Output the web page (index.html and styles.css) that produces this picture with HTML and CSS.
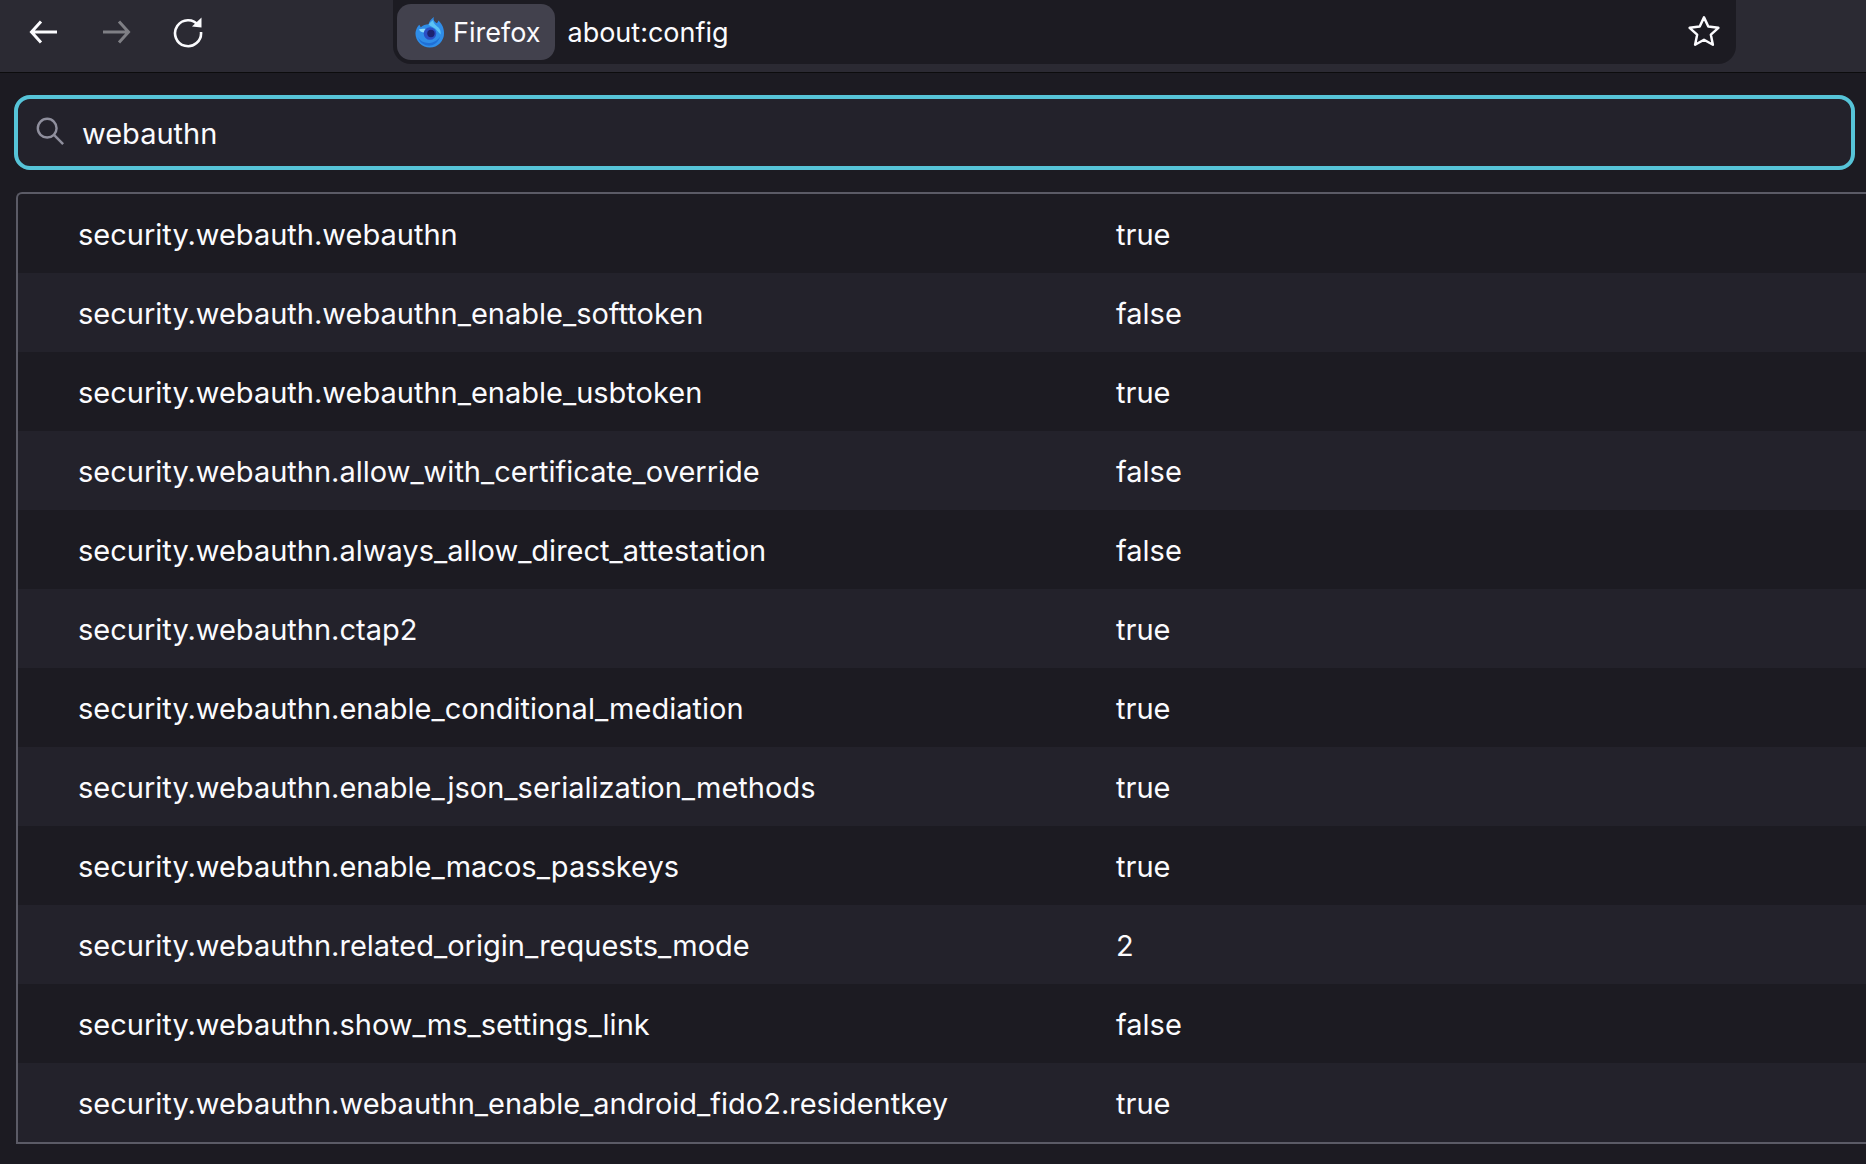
FILE: index.html
```html
<!DOCTYPE html>
<html lang="en">
<head>
 <meta charset="UTF-8">
 <title>about:config</title>
 <link rel="stylesheet" href="styles.css">
</head>
<body>
 <div class="toolbar">
 <div class="nav-buttons">
 <svg class="nav-icon" viewBox="0 0 32 32"><path d="M29 16H4M13 5.500 3.500 16 13 26.500" fill="none" stroke="#fbfbfe" stroke-width="3"/></svg>
 <svg class="nav-icon" viewBox="0 0 32 32"><path d="M3 16h25M19 5.500 28.500 16 19 26.500" fill="none" stroke="#7f7f85" stroke-width="3"/></svg>
 <svg class="nav-icon" viewBox="0 0 32 32"><path d="M26.500 9.500A13 13 0 1 0 29 16" fill="none" stroke="#fbfbfe" stroke-width="2.600"/><path d="M20 10.500 29.500 1.500V11.500Z" fill="#fbfbfe"/></svg>
 </div>
 <div class="urlbar">
 <div class="identity">
 <svg class="logo" viewBox="0 0 32 32">
 <path d="M2 14C3 11 4 9 5.500 8L7 10.500C9 8.500 12 7.500 15 7.500 15.500 4.500 18 2 20.500 0 19.500 3 21 5 23.500 6.500 24.500 5.500 25 4.500 25.200 3.500 28 6.500 31 10 31 16.500A14.500 14.500 0 0 1 1.500 17C1.500 16 1.700 15 2 14Z" fill="#2f8de8"/>
 <path d="M20 3C19.500 6 22 8 25 10.500 27 12.500 28 15 27.500 18L22 12 15 8C16 6 18 4.500 20 3Z" fill="#5cc3f5"/>
 <path d="M5 13C8 11.500 12 12 15 13.500L9.500 16C7.500 15.800 6 14.500 5 13Z" fill="#8fdcf8"/>
 <circle cx="16.500" cy="17" r="6.500" fill="#2b4fc4"/>
 <circle cx="17.500" cy="17" r="3.800" fill="#1d2270"/>
 <path d="M4 21C8 28 20 30 27 20 25 27 19 30 14 29.500 9 29 5.500 25.500 4 21Z" fill="#1f6fd6"/>
 </svg>
 <span class="bar-label">Firefox</span>
 </div>
 <span class="bar-label url-text">about:config</span>
 <svg class="star" viewBox="0 0 32 32"><path d="M16 3 19.800 11.200 28.800 12.300 22.100 18.400 23.900 27.300 16 22.900 8.100 27.300 9.900 18.400 3.200 12.300 12.200 11.200Z" fill="none" stroke="#fbfbfe" stroke-width="2.200" stroke-linejoin="round"/></svg>
 </div>
 </div>

 <div class="content">
 <div class="search">
 <svg class="search-icon" viewBox="0 0 32 32"><circle cx="13" cy="13" r="10" fill="none" stroke="#8f8f9d" stroke-width="2.600"/><path d="M20.500 20.500 30 30" stroke="#8f8f9d" stroke-width="2.600"/></svg>
 <span>webauthn</span>
 </div>

 <div class="prefs">
 <div class="pref"><span class="pref-name">security.webauth.webauthn</span><span>true</span></div>
 <div class="pref"><span class="pref-name">security.webauth.webauthn_enable_softtoken</span><span>false</span></div>
 <div class="pref"><span class="pref-name">security.webauth.webauthn_enable_usbtoken</span><span>true</span></div>
 <div class="pref"><span class="pref-name">security.webauthn.allow_with_certificate_override</span><span>false</span></div>
 <div class="pref"><span class="pref-name">security.webauthn.always_allow_direct_attestation</span><span>false</span></div>
 <div class="pref"><span class="pref-name">security.webauthn.ctap2</span><span>true</span></div>
 <div class="pref"><span class="pref-name">security.webauthn.enable_conditional_mediation</span><span>true</span></div>
 <div class="pref"><span class="pref-name">security.webauthn.enable_json_serialization_methods</span><span>true</span></div>
 <div class="pref"><span class="pref-name">security.webauthn.enable_macos_passkeys</span><span>true</span></div>
 <div class="pref"><span class="pref-name">security.webauthn.related_origin_requests_mode</span><span>2</span></div>
 <div class="pref"><span class="pref-name">security.webauthn.show_ms_settings_link</span><span>false</span></div>
 <div class="pref"><span class="pref-name">security.webauthn.webauthn_enable_android_fido2.residentkey</span><span>true</span></div>
 </div>
 </div>
</body>
</html>
```
FILE: styles.css
```css
html, body {
margin: 0;
height: 100%;
}
body {
font-family: Inter, "Liberation Sans", sans-serif;
font-size: 29px;
color: #fbfbfe;
background-color: #1c1b22;
overflow: hidden;
}
.toolbar {
display: flex;
align-items: flex-start;
height: 72px;
background: #2b2a33;
border-bottom: 1px solid #0c0c0d;
}
.nav-buttons {
display: flex;
gap: 40px;
width: 393px;
box-sizing: border-box;
padding: 16px 0 0 28px;
}
.nav-icon {
width: 32px;
height: 32px;
}
.urlbar {
display: flex;
align-items: center;
width: 1343px;
height: 64px;
box-sizing: border-box;
padding: 0 14px 0 4px;
background: #1c1b22;
border-radius: 0 0 18px 18px;
font-size: 27px;
}
.identity {
display: flex;
align-items: center;
gap: 8px;
height: 56px;
padding: 0 15px 0 17px;
background: #42414d;
border-radius: 14px;
}
.logo {
width: 31px;
height: 31px;
}
.bar-label {
padding-top: 1px;
}
.url-text {
margin-left: 12px;
flex: 1;
}
.star {
width: 36px;
height: 36px;
}
.content {
padding: 22px 11px 0 14px;
}
.search {
display: flex;
align-items: center;
gap: 17px;
height: 75px;
box-sizing: border-box;
padding: 1px 0 0 17px;
background: #23222b;
border: 4px solid #56c4d8;
border-radius: 16px;
}
.search-icon {
width: 30px;
height: 30px;
margin-bottom: 5px;
}
.prefs {
margin: 22px -11px 0 2px;
border: 2px solid #5b5b66;
border-right: none;
border-radius: 6px 0 0 0;
}
.pref {
display: flex;
align-items: center;
height: 79px;
box-sizing: border-box;
padding-top: 1px;
}
.pref:nth-child(even) {
background: #23222b;
}
.pref-name {
width: 1038px;
padding-left: 60px;
flex-shrink: 0;
}
```
